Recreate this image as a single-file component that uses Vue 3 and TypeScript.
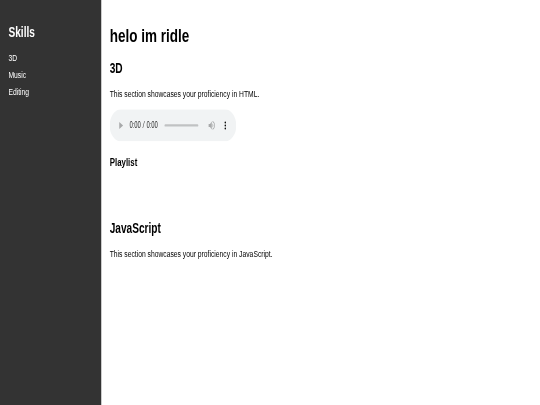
<script setup lang="ts">
const skills: string[] = ['3D', 'Music', 'Editing']
</script>

<template>
  <div class="viewport">
    <div class="page">
      <aside class="sidebar">
        <h2>Skills</h2>
        <ul>
          <li v-for="skill in skills" :key="skill"><a href="#">{{ skill }}</a></li>
        </ul>
      </aside>
      <main class="content">
        <h1>helo im ridle</h1>
        <section class="skill">
          <h2>3D</h2>
          <p>This section showcases your proficiency in HTML.</p>
          <audio controls></audio>
          <h3>Playlist</h3>
          <ul class="playlist"></ul>
        </section>
        <section class="skill">
          <h2>JavaScript</h2>
          <p>This section showcases your proficiency in JavaScript.</p>
        </section>
      </main>
    </div>
  </div>
</template>

<style>
html, body { margin: 0; background: #fff; overflow: hidden; }
</style>

<style scoped>
.viewport { width: 540px; height: 405px; overflow: hidden; }
.page {
  width: 1280px;
  height: 675px;
  display: flex;
  transform: scale(0.421875, 0.6);
  transform-origin: 0 0;
  font-family: "Liberation Sans", Arial, sans-serif;
  color: #000;
  filter: blur(1.15px);
}
.sidebar {
  box-sizing: border-box;
  width: 240px;
  flex: none;
  padding: 20px;
  background: #333;
  color: #fff;
}
.sidebar ul { list-style: none; margin: 0; padding: 0; }
.sidebar li { margin-bottom: 10px; }
.sidebar a { color: #fff; text-decoration: none; }
.content { flex: 1; padding: 20px; }
.skill { margin-bottom: 40px; }
.playlist { margin: 0; padding: 0 0 28px; }
audio { display: inline-block; }
</style>
